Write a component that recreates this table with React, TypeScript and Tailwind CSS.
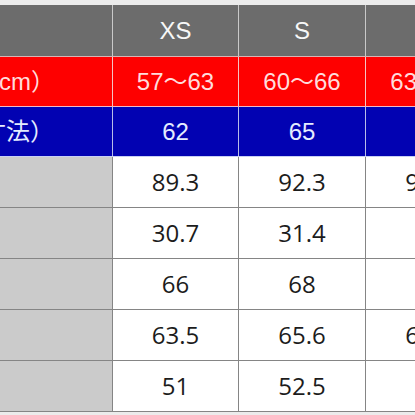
import React from 'react'

type Band = {
  label: string
  labelPad: string
  cells: string[]
  rowClass: string
  textClass: string
  lineClass: string
}

const colWidths = ['w-[113px]', 'w-[126px]', 'w-[127px]', 'w-[126px]']

const bands: Band[] = [
  {
    label: '',
    labelPad: '',
    cells: ['XS', 'S', 'M'],
    rowClass: 'h-[52px] bg-[#6c6c6c] border-b border-[#d9b3b3]',
    textClass: 'text-[#f7f7f7]',
    lineClass: 'border-[#c9c9c9]',
  },
  {
    label: '頭囲（cm）',
    labelPad: 'pr-[57px]',
    cells: ['57〜63', '60〜66', '63〜69'],
    rowClass: 'h-[50px] bg-[#fe0000] border-b border-[#f0b8c8]',
    textClass: 'text-[#ffdcdc]',
    lineClass: 'border-[#f4c4c4]',
  },
  {
    label: '適応サイズ（実寸法）',
    labelPad: 'pr-[58px]',
    cells: ['62', '65', '68'],
    rowClass: 'h-[50px] bg-[#0202b2] border-b border-[#c8d0f4]',
    textClass: 'text-[#e4ecff]',
    lineClass: 'border-[#b8bde8]',
  },
]

// last column is cut off by the window; only some of its values peek in
const body: string[][] = [
  ['89.3', '92.3', '95.3'],
  ['30.7', '31.4', ''],
  ['66', '68', ''],
  ['63.5', '65.6', '67.7'],
  ['51', '52.5', ''],
]

const headFont = { fontFamily: '"Liberation Sans", "Noto Sans CJK JP", sans-serif' }
const bodyFont = { fontFamily: '"Open Sans", "Noto Sans", sans-serif' }

export default function App(): React.ReactElement {
  return (
    <div className="h-[415px] w-[415px] overflow-hidden bg-[#ececec] pt-[5px]">
      <div className="w-[492px]">
        {bands.map((band, i) => (
          <div key={i} className={`flex ${band.rowClass}`} style={headFont}>
            <div
              className={`flex ${colWidths[0]} shrink-0 items-center justify-end overflow-hidden whitespace-nowrap border-r ${band.lineClass} ${band.labelPad} text-[24px] ${band.textClass}`}
            >
              {band.label}
            </div>
            {band.cells.map((c, j) => (
              <div
                key={j}
                className={`flex ${colWidths[j + 1]} shrink-0 items-center justify-center text-[24px] ${band.textClass} ${
                  j < 2 ? `border-r ${band.lineClass}` : ''
                }`}
              >
                {c}
              </div>
            ))}
          </div>
        ))}
        {body.map((row, i) => (
          <div key={i} className="flex h-[51px] border-b border-[#858585] bg-white" style={bodyFont}>
            <div className={`${colWidths[0]} shrink-0 border-r border-[#858585] bg-[#cbcbcb]`} />
            {row.map((v, j) => (
              <div
                key={j}
                className={`flex ${colWidths[j + 1]} shrink-0 items-center justify-center text-[24px] text-[#1c1c1c] ${
                  j < 2 ? 'border-r border-[#858585]' : ''
                }`}
              >
                {v}
              </div>
            ))}
          </div>
        ))}
      </div>
    </div>
  )
}
